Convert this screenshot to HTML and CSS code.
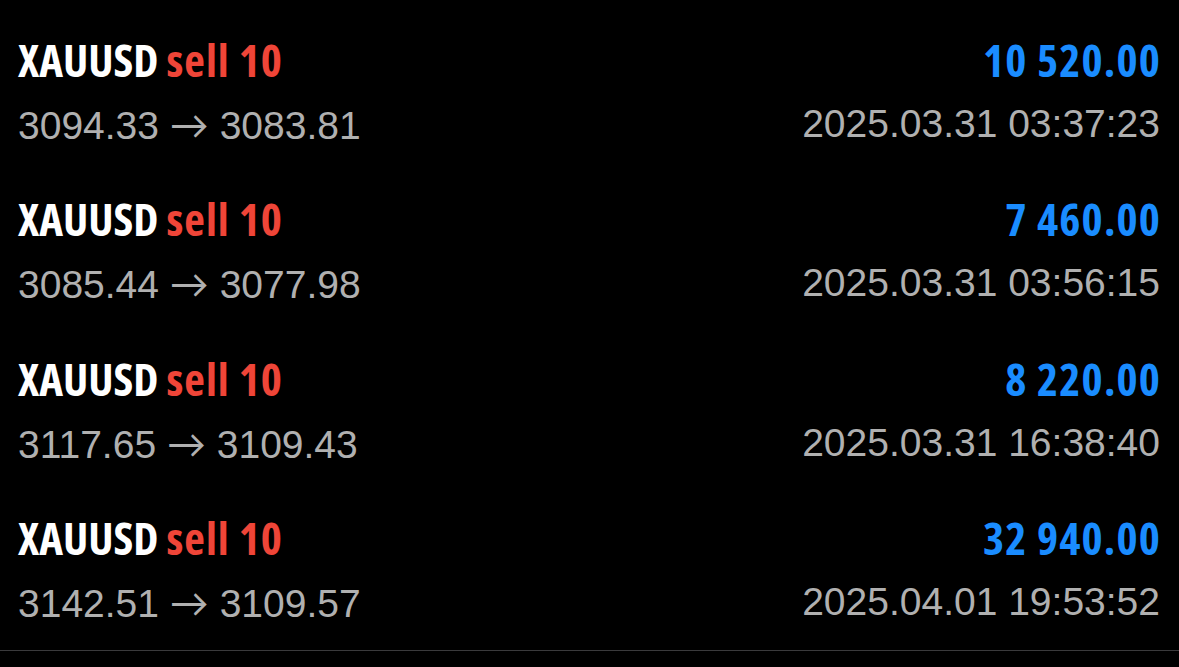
FILE: index.html
```html
<!DOCTYPE html>
<html lang="en">
<head>
    <meta charset="UTF-8" />
    <meta name="viewport" content="width=device-width, initial-scale=1" />
    <title>History</title>
    <link rel="stylesheet" href="styles.css">
</head>
<body>

    <div class="deals">
        <div class="deal">
            <div class="deal-top">
                <span class="symbol">XAUUSD <span class="side">sell 10</span></span>
                <span class="profit">10 520.00</span>
            </div>
            <div class="deal-bottom">
                <span>3094.33 <span class="arrow">→</span> 3083.81</span>
                <span>2025.03.31 03:37:23</span>
            </div>
        </div>
        <div class="deal">
            <div class="deal-top">
                <span class="symbol">XAUUSD <span class="side">sell 10</span></span>
                <span class="profit">7 460.00</span>
            </div>
            <div class="deal-bottom">
                <span>3085.44 <span class="arrow">→</span> 3077.98</span>
                <span>2025.03.31 03:56:15</span>
            </div>
        </div>
        <div class="deal">
            <div class="deal-top">
                <span class="symbol">XAUUSD <span class="side">sell 10</span></span>
                <span class="profit">8 220.00</span>
            </div>
            <div class="deal-bottom">
                <span>3117.65 <span class="arrow">→</span> 3109.43</span>
                <span>2025.03.31 16:38:40</span>
            </div>
        </div>
        <div class="deal">
            <div class="deal-top">
                <span class="symbol">XAUUSD <span class="side">sell 10</span></span>
                <span class="profit">32 940.00</span>
            </div>
            <div class="deal-bottom">
                <span>3142.51 <span class="arrow">→</span> 3109.57</span>
                <span>2025.04.01 19:53:52</span>
            </div>
        </div>
    </div>

</body>
</html>
```

FILE: styles.css
```css
body {
    margin: 0;
    padding: 0;
    background-color: #000;
    font-family: "Liberation Sans", Arial, sans-serif;
}
.deals {
    padding-top: 13px;
    border-bottom: 1px solid #3a3a3c;
}
.deal {
    height: 159.3px;
    padding: 16px 19px 0 18px;
    box-sizing: border-box;
}
.deal-top {
    display: flex;
    justify-content: space-between;
    font-family: "Open Sans", sans-serif;
    font-stretch: 75%;
    font-weight: bold;
    font-size: 45px;
    line-height: 61px;
    color: #fff;
}
.side {
    color: #ef4538;
    letter-spacing: 1px;
}
.profit {
    color: #1a8cff;
    letter-spacing: 1.2px;
    margin-right: -1.2px;
}
.deal-bottom {
    display: flex;
    justify-content: space-between;
    font-size: 39px;
    line-height: 68px;
    color: #b0b0b0;
}
.arrow {
    font-family: Lato, sans-serif;
}
```
